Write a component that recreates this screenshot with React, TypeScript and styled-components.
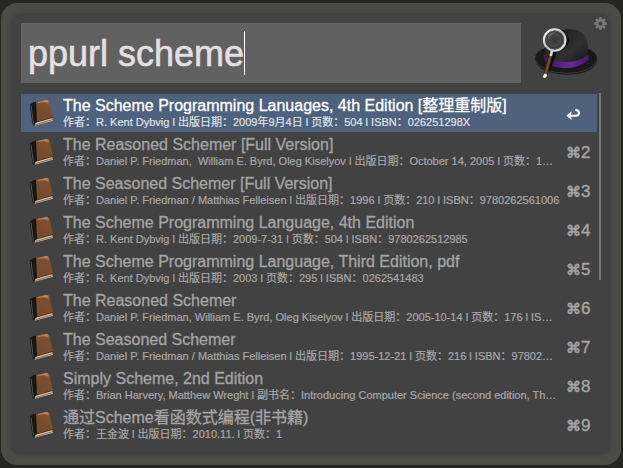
import React, { useState } from "react";
import styled, { createGlobalStyle } from "styled-components";

const GlobalStyle = createGlobalStyle`
  * { box-sizing: border-box; }
  body {
    margin: 0;
    background: #25261f;
    font-family: "Liberation Sans", "Noto Sans CJK SC", sans-serif;
  }
  button, input { font: inherit; color: inherit; }
`;

const Frame = styled.main`
  margin: 3px 2px 3px 1px;
  padding: 10px;
  border-radius: 16px;
  background: #4b4c46;
`;

const Panel = styled.div`
  position: relative;
  padding: 10px;
  border-radius: 10px;
  background: #424242;
  box-shadow: 0 0 4px #424242;
`;

const Header = styled.header`
  display: flex;
  align-items: flex-start;
  gap: 12px;
  padding-right: 2px;
`;

const SearchField = styled.label`
  flex: 1;
  min-width: 0;
  height: 60px;
  padding: 0 7px;
  display: flex;
  align-items: center;
  background: #616161;
  overflow: hidden;
`;

const SearchInput = styled.input`
  field-sizing: content;
  min-width: 0;
  padding: 2px 0 0;
  border: 0;
  outline: 0;
  background: transparent;
  color: #e2e0e2;
  caret-color: transparent;
  font-size: 36px;
  line-height: 44px;
  -webkit-text-stroke: 0.6px currentColor;
`;

const Caret = styled.span`
  width: 1px;
  height: 44px;
  background: #fff;
`;

const HatSvg = styled.svg`
  width: 66px;
  height: 54px;
  margin-top: 2px;
  flex: none;
`;

const GearButton = styled.button`
  position: absolute;
  top: 4px;
  right: 4px;
  width: 13px;
  height: 13px;
  padding: 0;
  border: 0;
  background: transparent;
  color: #777;
  display: flex;
`;

const Results = styled.div`
  display: flex;
  align-items: flex-start;
  gap: 2px;
  margin-top: 10px;
`;

const List = styled.ul`
  flex: 1;
  min-width: 0;
  margin: 0;
  padding: 1px 0 0;
  list-style: none;
`;

const ScrollThumb = styled.div`
  width: 2px;
  height: 187px;
  background: #777;
`;

const Row = styled.button<{ $selected: boolean }>`
  width: 100%;
  height: 38px;
  margin-bottom: 1px;
  padding: 0 6px 0 8px;
  border: 0;
  display: flex;
  align-items: center;
  text-align: left;
  background: ${(p) => (p.$selected ? "#4e617d" : "transparent")};
  color: ${(p) => (p.$selected ? "#fff" : "#a5a5a5")};
`;

const BookSvg = styled.svg`
  flex: none;
  width: 26px;
  height: 30px;
  margin-right: 8px;
`;

const Texts = styled.span`
  flex: 1;
  min-width: 0;
  padding-bottom: 2px;
  display: flex;
  flex-direction: column;
`;

const Title = styled.span`
  font-size: 16px;
  line-height: 20px;
  white-space: nowrap;
  overflow: hidden;
  -webkit-text-stroke: 0.3px currentColor;
`;

const Subtitle = styled.span<{ $selected: boolean }>`
  font-size: 11px;
  line-height: 13px;
  white-space: pre;
  color: ${(p) => (p.$selected ? "#dfe2e6" : "#a8a8a8")};
  -webkit-text-stroke: 0.2px currentColor;
`;

const Shortcut = styled.span`
  flex: none;
  width: 25px;
  padding-top: 2px;
  display: flex;
  align-items: center;
  justify-content: flex-start;
  font-size: 17px;
  line-height: 20px;
  -webkit-text-stroke: 0.4px currentColor;
`;

const CommandKey = styled.span`
  width: 15px;
  font-family: "DejaVu Sans", sans-serif;
  font-size: 15px;
  -webkit-text-stroke: 0.6px currentColor;
`;

const items = [
  { title: "The Scheme Programming Lanuages, 4th Edition [整理重制版]", sub: "作者：R. Kent Dybvig l 出版日期：2009年9月4日 l 页数：504 l ISBN：026251298X" },
  { title: "The Reasoned Schemer [Full Version]", sub: "作者：Daniel P. Friedman,  William E. Byrd, Oleg Kiselyov l 出版日期：October 14, 2005 l 页数：1…" },
  { title: "The Seasoned Schemer [Full Version]", sub: "作者：Daniel P. Friedman / Matthias Felleisen l 出版日期：1996 l 页数：210 l ISBN：9780262561006" },
  { title: "The Scheme Programming Language, 4th Edition", sub: "作者：R. Kent Dybvig l 出版日期：2009-7-31 l 页数：504 l ISBN：9780262512985" },
  { title: "The Scheme Programming Language, Third Edition, pdf", sub: "作者：R. Kent Dybvig l 出版日期：2003 l 页数：295 l ISBN：0262541483" },
  { title: "The Reasoned Schemer", sub: "作者：Daniel P. Friedman, William E. Byrd, Oleg Kiselyov l 出版日期：2005-10-14 l 页数：176 l IS…" },
  { title: "The Seasoned Schemer", sub: "作者：Daniel P. Friedman / Matthias Felleisen l 出版日期：1995-12-21 l 页数：216 l ISBN：97802…" },
  { title: "Simply Scheme, 2nd Edition", sub: "作者：Brian Harvery, Matthew Wreght l 副书名：Introducing Computer Science (second edition, Th…" },
  { title: "通过Scheme看函数式编程(非书籍)", sub: "作者：王金波 l 出版日期：2010.11. l 页数：1" },
];

function Book() {
  return (
    <BookSvg viewBox="0 0 78 90" aria-hidden="true">
      <defs>
        <linearGradient id="cover" x1="0.7" y1="0" x2="0.3" y2="1">
          <stop offset="0" stopColor="#a87148" />
          <stop offset="0.2" stopColor="#7d4f2e" />
          <stop offset="1" stopColor="#74492b" />
        </linearGradient>
      </defs>
      <path d="M11 79 L20 70 L70 56 L73 67 L16 84Z" fill="#3c261a" />
      <path d="M17 75 L70 60 L72 68 L17 83Z" fill="#d8bfa8" />
      <path d="M19 80 L71 65" stroke="#6b4933" strokeWidth="2" />
      <path d="M2 20 L13 13 L25 14 L22 72 L15 82 L10 78Z" fill="#171717" />
      <path d="M6 22 L13 77" stroke="#707070" strokeWidth="2" />
      <path d="M15 13 L54 5 Q58 5 60 10 L72 57 L19 73Z" fill="url(#cover)" />
      <path d="M13 13 L21 11 L24 71 L17 75Z" fill="#191512" />
      <path d="M26 12 L54 6 L58 14 Q43 10 26 16Z" fill="#d39a6b" opacity="0.65" />
    </BookSvg>
  );
}

function Hat() {
  return (
    <HatSvg viewBox="9 45 198 162" aria-hidden="true">
      <defs>
        <linearGradient id="crown" x1="0" y1="0" x2="1" y2="1">
          <stop offset="0" stopColor="#171717" />
          <stop offset="0.6" stopColor="#303030" />
          <stop offset="1" stopColor="#141414" />
        </linearGradient>
        <linearGradient id="band" x1="0" x2="1">
          <stop offset="0" stopColor="#3f1458" />
          <stop offset="0.6" stopColor="#692990" />
          <stop offset="1" stopColor="#481863" />
        </linearGradient>
        <radialGradient id="lens">
          <stop offset="0" stopColor="#343434" />
          <stop offset="0.6" stopColor="#484848" />
          <stop offset="1" stopColor="#222" />
        </radialGradient>
        <linearGradient id="metal" x1="0" y1="0" x2="1" y2="1">
          <stop offset="0" stopColor="#fff" />
          <stop offset="0.5" stopColor="#b6b6b6" />
          <stop offset="1" stopColor="#f0f0f0" />
        </linearGradient>
      </defs>
      <path d="M15 145 Q17 122 46 114 L169 114 Q201 125 201 147 Q198 192 111 194 Q22 192 15 145Z" fill="#191919" />
      <path d="M18 151 Q32 187 109 190 Q184 189 199 154" fill="none" stroke="#393939" strokeWidth="3" />
      <path d="M42 150 C40 90 60 58 121 58 C158 58 174 82 174 110 V151 Q110 184 42 150Z" fill="url(#crown)" />
      <path d="M40 132 Q58 156 105 156 Q154 156 175 133 L177 148 Q151 174 105 175 Q57 173 42 151Z" fill="url(#band)" />
      <path d="M92 111 Q118 97 111 67 L119 91 Q114 115 82 124 L60 184 L52 181 L68 119Z" fill="#080808" opacity="0.85" />
      <path d="M66 122 L62 139" stroke="#d6d6d6" strokeWidth="8" />
      <path d="M61 138 L47 191" stroke="#302313" strokeWidth="13" />
      <path d="M61 138 L47 191" stroke="#73501f" strokeWidth="7" />
      <path d="M46 196 L44 199" stroke="#eee" strokeWidth="10" strokeLinecap="round" />
      <circle cx="74" cy="90" r="32" fill="url(#lens)" stroke="url(#metal)" strokeWidth="7" />
      <circle cx="74" cy="90" r="27" fill="none" stroke="#555" strokeWidth="3" />
      <path d="M53 80 Q60 67 77 66 Q61 74 55 87Z" fill="#aaa" opacity="0.4" />
    </HatSvg>
  );
}

function Gear() {
  const teeth = [0, 45, 90, 135, 180, 225, 270, 315];
  return (
    <svg viewBox="0 0 36 36" width="13" height="13" aria-hidden="true">
      {teeth.map((a) => (
        <rect key={a} x="14" y="1" width="8" height="9" rx="1" fill="currentColor" transform={`rotate(${a} 18 18)`} />
      ))}
      <circle cx="18" cy="18" r="9" fill="none" stroke="currentColor" strokeWidth="7" />
    </svg>
  );
}

function ReturnArrow() {
  return (
    <svg width="15" height="14" viewBox="0 0 45 42" aria-hidden="true">
      <path d="M14 26 H30 Q39 26 39 18 Q39 9 28 9" fill="none" stroke="currentColor" strokeWidth="6" />
      <path d="M1 26 L17 13 L15 26 L17 39Z" fill="currentColor" />
    </svg>
  );
}

export default function App() {
  const [query, setQuery] = useState("ppurl scheme");
  const [selected, setSelected] = useState(0);
  return (
    <>
      <GlobalStyle />
      <Frame>
        <Panel>
          <Header>
            <SearchField>
              <SearchInput aria-label="Search" spellCheck={false} value={query} onChange={(e) => setQuery(e.target.value)} />
              <Caret />
            </SearchField>
            <Hat />
          </Header>
          <GearButton type="button" aria-label="Preferences">
            <Gear />
          </GearButton>
          <Results>
            <List>
              {items.map((item, i) => (
                <li key={i}>
                  <Row type="button" $selected={i === selected} onClick={() => setSelected(i)}>
                    <Book />
                    <Texts>
                      <Title>{item.title}</Title>
                      <Subtitle $selected={i === selected}>{item.sub}</Subtitle>
                    </Texts>
                    <Shortcut>
                      {i === selected ? (
                        <ReturnArrow />
                      ) : (
                        <>
                          <CommandKey>⌘</CommandKey>
                          {i + 1}
                        </>
                      )}
                    </Shortcut>
                  </Row>
                </li>
              ))}
            </List>
            <ScrollThumb />
          </Results>
        </Panel>
      </Frame>
    </>
  );
}
